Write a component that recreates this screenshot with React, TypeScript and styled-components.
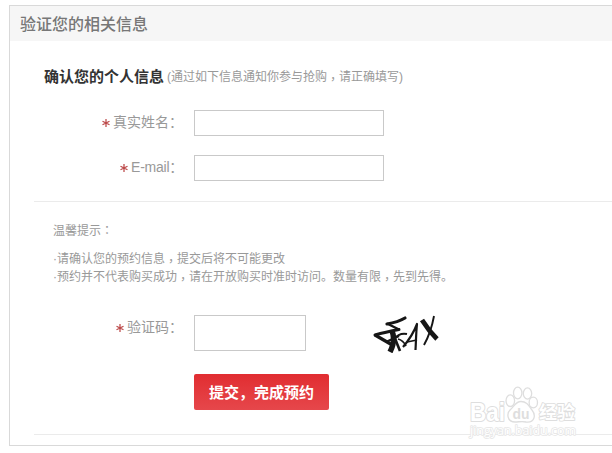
import React from "react";
import styled, { createGlobalStyle } from "styled-components";

const Global = createGlobalStyle`
  *, *::before, *::after { box-sizing: border-box; }
  body {
    margin: 0;
    background: #fff;
    overflow: hidden;
    font-family: "Liberation Sans", "Noto Sans CJK SC", sans-serif;
    color: #999;
  }
`;

const Page = styled.main`
  position: relative;
  width: 612px;
  height: 453px;
  padding: 5px 0 0 9px;
  overflow: hidden;
`;

const Panel = styled.section`
  height: 441px;
  border: 1px solid #d9d9d9;
  border-right: 0;
`;

const Header = styled.h1`
  margin: 0;
  height: 35px;
  padding-left: 10px;
  background: #f6f6f6;
  font: 500 16px/34px "Noto Sans CJK SC", sans-serif;
  color: #777;
`;

const Heading = styled.div`
  display: flex;
  align-items: center;
  gap: 3px;
  height: 24px;
  margin: 23px 0 22px 34px;
  white-space: nowrap;
`;

const HeadingTitle = styled.h2`
  margin: 0;
  font: 700 15px/22px "Noto Sans CJK SC", sans-serif;
  color: #333;
`;

const Note = styled.span`
  font-size: 12px;
  line-height: 24px;
  padding-top: 1px;
`;

const Mark = styled.span<{ $drop?: number }>`
  font-family: "Noto Sans CJK TC", sans-serif;
  line-height: 1;
  vertical-align: ${(p) => -(p.$drop ?? 0)}px;
`;

const Field = styled.div<{ $height: number; $after: number }>`
  display: flex;
  height: ${(p) => p.$height}px;
  margin-bottom: ${(p) => p.$after}px;
`;

const Label = styled.label`
  display: flex;
  justify-content: flex-end;
  gap: 3px;
  width: 173px;
  margin-right: 11px;
  font-size: 14px;
  line-height: 24px;
  white-space: nowrap;
`;

const Latin = styled.span`
  letter-spacing: -0.25px;
`;

const Required = styled.svg`
  width: 8px;
  height: 8px;
  margin-top: 9px;
  stroke: #bd4a4a;
  stroke-width: 1.25;
`;

const Input = styled.input<{ $width: number }>`
  width: ${(p) => p.$width}px;
  height: 100%;
  border: 1px solid #c9c9c9;
  border-radius: 0;
  padding: 0 6px;
  background: #fff;
  outline: 0;
`;

const Rule = styled.hr`
  height: 1px;
  margin: 0 0 0 24px;
  border: 0;
  background: #ebebeb;
`;

const Tips = styled.div`
  margin: 20px 0 29px 43px;
  font-size: 12px;
  line-height: 18px;
  white-space: nowrap;
`;

const TipsTitle = styled.p`
  height: 18px;
  margin: 0 0 10px;
`;

const Tip = styled.p`
  display: flex;
  margin: 0 0 0 1px;
  height: 18px;
`;

const Dot = styled.span`
  width: 3px;
  text-indent: -1px;
`;

const Captcha = styled.svg`
  width: 68px;
  height: 38px;
  margin-left: 66px;
`;

const Submit = styled.button`
  display: block;
  width: 135px;
  height: 36px;
  margin: 0 0 24px 184px;
  padding: 0;
  border: 0;
  border-radius: 2px;
  background: linear-gradient(#e12d31, #e6474b);
  color: #fff;
  font: 700 15px/36px "Noto Sans CJK SC", sans-serif;
`;

const Watermark = styled.svg`
  position: absolute;
  left: 462px;
  top: 380px;
  width: 130px;
  height: 64px;
`;

function Star() {
  return (
    <Required viewBox="0 0 8 8" aria-label="必填">
      <path d="M4 0V8M.5 2.2L7.5 5.8M.5 5.8L7.5 2.2" />
    </Required>
  );
}

function CaptchaImage() {
  return (
    <Captcha viewBox="372 314 68 38" fill="none" stroke="#161616" strokeLinejoin="round" role="img" aria-label="验证码">
      <path d="M405 317C400 320 393 322 387 323" strokeWidth="3.200" strokeLinecap="round" />
      <path d="M387 322.500L399 328.500" strokeWidth="2.400" />
      <path d="M399 328.500C391 330 382 332 375 334" strokeWidth="3" strokeLinecap="round" />
      <path d="M375 334L394 345" strokeWidth="3.200" />
      <path d="M392 330C395 337 394 343 390 351" strokeWidth="5.500" />
      <path d="M394 335L400 350" strokeWidth="2.600" />
      <path d="M394 338C398 333 402 332 407 333" strokeWidth="2" />
      <path d="M386 341L399 335" strokeWidth="2.400" />
      <path d="M398 338C402 339 404 341 406 345" strokeWidth="1.800" />
      <path d="M403 346C409 339 414 331 417 323C416 332 416 341 415.500 349" strokeWidth="2.200" />
      <path d="M407 341L417 339" strokeWidth="1.700" />
      <path d="M422 319C427 327 431 332 437 338" strokeWidth="4.800" />
      <path d="M434 315C432 326 429 335 424 344" strokeWidth="1.900" />
    </Captcha>
  );
}

function BaiduWatermark() {
  return (
    <Watermark viewBox="462 380 130 64" strokeLinejoin="round" fill="#fff" stroke="#dedede">
      <text x="470" y="421" fontSize="25" fontFamily="Liberation Sans, sans-serif" fontWeight="700" textLength="35" lengthAdjust="spacingAndGlyphs" paintOrder="stroke" strokeWidth="2">Bai</text>
      <g strokeWidth="1.300">
        <ellipse cx="510.300" cy="400.700" rx="4.300" ry="5.800" />
        <ellipse cx="517.700" cy="393" rx="4.200" ry="5.800" />
        <ellipse cx="527.500" cy="393.500" rx="4.200" ry="5.600" />
        <ellipse cx="533.300" cy="402.500" rx="4.200" ry="5.300" />
        <path d="M521 401.500C516 401.500 514 406 511 409C506 413 507 422 515 422C519 422 522 421 526 422C535 423 536 415 532 410C529 406 527 401.500 521 401.500Z" />
      </g>
      <text x="512.500" y="418.500" fontSize="15" fontWeight="700" fontFamily="Liberation Sans, sans-serif" textLength="17" lengthAdjust="spacingAndGlyphs" fill="#dedede" stroke="none">du</text>
      <text x="539" y="419" fontSize="18" fontWeight="700" fontFamily="Noto Sans CJK SC, sans-serif" paintOrder="stroke" strokeWidth="1.800">经验</text>
      <text x="470" y="435" fontSize="13" fontFamily="Open Sans, sans-serif" textLength="106" lengthAdjust="spacingAndGlyphs" paintOrder="stroke" stroke="#e6e6e6" strokeWidth="1.600">jingyan.baidu.com</text>
    </Watermark>
  );
}

export default function App() {
  return (
    <>
      <Global />
      <Page>
        <Panel>
          <Header>验证您的相关信息</Header>
          <Heading>
            <HeadingTitle>确认您的个人信息</HeadingTitle>
            <Note>(通过如下信息通知你参与抢购<Mark $drop={3}>，</Mark>请正确填写)</Note>
          </Heading>
          <Field $height={26} $after={19}>
            <Label htmlFor="name"><Star /><span>真实姓名：</span></Label>
            <Input id="name" $width={190} />
          </Field>
          <Field $height={26} $after={20}>
            <Label htmlFor="email"><Star /><Latin>E-mail：</Latin></Label>
            <Input id="email" $width={190} />
          </Field>
          <Rule />
          <Tips>
            <TipsTitle>温馨提示<Mark>：</Mark></TipsTitle>
            <Tip><Dot>·</Dot><span>请确认您的预约信息<Mark $drop={3}>，</Mark>提交后将不可能更改</span></Tip>
            <Tip><Dot>·</Dot><span>预约并不代表购买成功<Mark $drop={3}>，</Mark>请在开放购买时准时访问。数量有限<Mark $drop={3}>，</Mark>先到先得。</span></Tip>
          </Tips>
          <Field $height={36} $after={23}>
            <Label htmlFor="code"><Star /><span>验证码：</span></Label>
            <Input id="code" $width={112} />
            <CaptchaImage />
          </Field>
          <Submit type="button">提交，完成预约</Submit>
          <Rule />
        </Panel>
        <BaiduWatermark />
      </Page>
    </>
  );
}
